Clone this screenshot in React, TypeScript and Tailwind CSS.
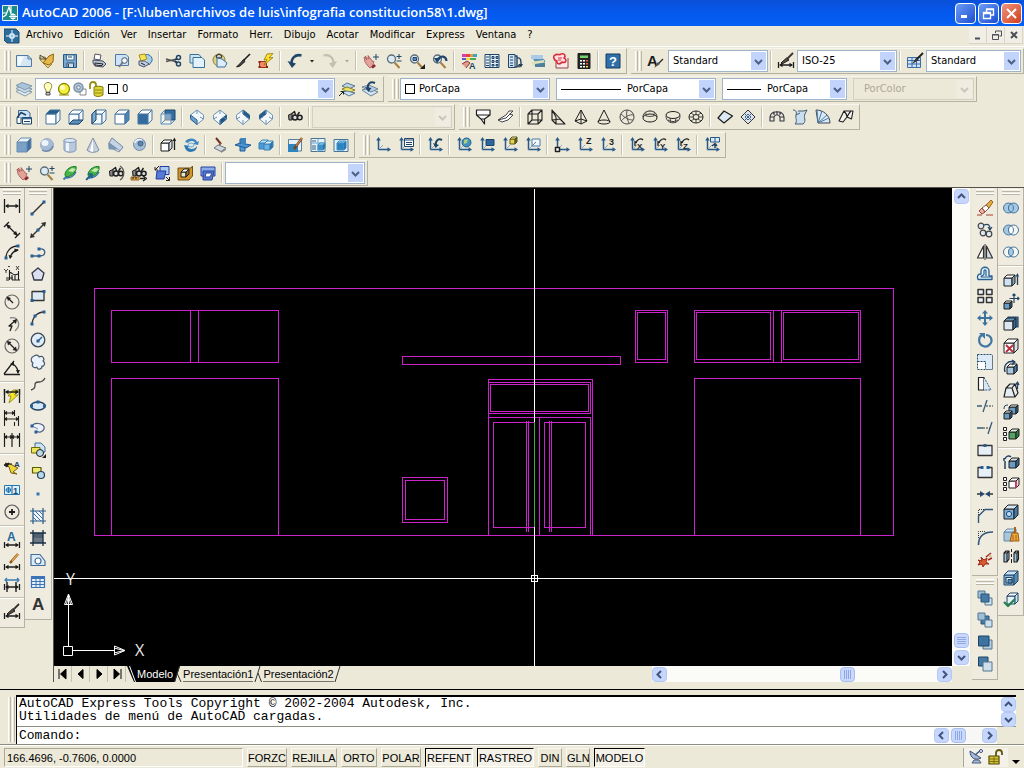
import type { ReactNode } from "react";

const K = "#1e1e1e";
const N = "#1f4468";
const B = "#5a8dbd";
const L = "#cfe3f6";
const W = "#ffffff";

const p = (d: string, stroke = K, fill = "none", w = 1) => (
  <path d={d} stroke={stroke} fill={fill} strokeWidth={w} strokeLinejoin="round" />
);

const c = (x: number, y: number, r: number, stroke = K, fill = "none", w = 1) => (
  <circle cx={x} cy={y} r={r} stroke={stroke} fill={fill} strokeWidth={w} />
);

const e = (x: number, y: number, rx: number, ry: number, stroke = K, fill = "none", w = 1) => (
  <ellipse cx={x} cy={y} rx={rx} ry={ry} stroke={stroke} fill={fill} strokeWidth={w} />
);

const cube = (x: number, y: number, s: number, d: number, front = L, top = W, side = B, line = N) => (
  <>
    {p(`M${x} ${y + d}h${s}v${s}h${-s}z`, line, front)}
    {p(`M${x} ${y + d}l${d} ${-d}h${s}l${-d} ${d}z`, line, top)}
    {p(`M${x + s} ${y + d}l${d} ${-d}v${s}l${-d} ${d}z`, line, side)}
  </>
);

const letter = (x: number, y: number, size: number, ch: string, fill = K) => (
  <text x={x} y={y} fontSize={size} fontWeight="bold" fontFamily="Liberation Sans, sans-serif" fill={fill}>
    {ch}
  </text>
);

const axes = (
  <>
    {p("M3.5 2V12.5H14", "#27598a", "none", 1.5)}
    {p("M3.5 0L1.2 3.5H5.8z", "none", "#27598a")}
    {p("M16 12.5L12.5 10.2V14.8z", "none", "#27598a")}
    {p("M3.5 12.5L8 8", "#8fa9c2")}
  </>
);

const isoView = (shaded: string, fill: string) => (
  <>
    {p("M8 1L14.500 6V10L8 15.500L1.500 10V6z", "#6d93b5", "#f4f8fb")}
    {p(shaded, "#2c5f8e", fill)}
    {p("M8 1V5M1.500 10L5 8M14.500 10L11 8M8 15.500V11", "#6d93b5")}
  </>
);

const hand = (
  <>
    {p("M1 4L4 7L2 3L6 6L5 2.500L8 6L9 8L11 8.500L9.500 13L7 15L4 12L2 9z", "#a5544e", "#e2a39a", 0.8)}
    {p("M8 14L11 11L13 13L10 15.500z", "none", "#8c2b36")}
    {p("M13 1V7M10 4H16", N)}
  </>
);

const lens = (
  <>
    {p("M8.500 9.500L13.500 15", "#a57f3f", "none", 2)}
    {c(5.500, 6, 4, "#5d6d79", "#dceaf3", 1.3)}
  </>
);

const orbit = (
  <>
    {p("M1.500 14.500L5 11", "#3d7fb8", "none", 2)}
    {p("M3 9C4 4 9 1 14 1.500C15 6 11 11 5 12C3.500 11.500 3 10.500 3 9z", "#1a7a25", "#45b545")}
    {p("M6 6L10 3L14 4L11 7z", "none", "#c8ecb0")}
    {p("M4 13C8 13 12 11 14 7", "#2f6ca5", "none", 1.3)}
  </>
);

const camera = (
  <>
    {p("M1.500 6L5 4.500V11H2z", K, "#888")}
    {c(8, 8.500, 2.500, K, "#ddd", 1.5)}
    {c(12.800, 8.500, 2.300, K, "#ddd", 1.5)}
    {p("M5 4.500L7.500 2.500L8.500 6M10.500 6L12.500 3", K, "none", 1.4)}
  </>
);

const dimLine = (y: number, half = 3) => (
  <>
    {p(`M.5 ${y - half}V${y + half}M15.500 ${y - half}V${y + half}M2 ${y}H14`, K, "none", 1.3)}
    {p(`M1 ${y}L4.500 ${y - 2.2}V${y + 2.2}z`, "none", K)}
    {p(`M15 ${y}L11.500 ${y - 2.2}V${y + 2.2}z`, "none", K)}
  </>
);

const brush = (
  <>
    {p("M15 1L8 8", K, "none", 1.6)}
    {p("M8.500 6.500L10 8.500L5 13L1.500 14L5.500 10z", K, "#4a4a4a")}
  </>
);

const bolt = p("M9 2L4 8L7 8L5 15L14 7L10.500 7L14 2z", "#8b7d00", "#f4e52a", 0.8);

const dot = (x: number, y: number) => p(`M${x - 1.5} ${y - 1.5}h3v3h-3z`, "none", "#265f94");

const rings = (a: string, m: string, b: string) => (
  <>
    {c(5.500, 8, 5, "#44739c", a)}
    {c(10.500, 8, 5, "#44739c", b)}
    {p("M8 3.700A5 5 0 0 1 8 12.300A5 5 0 0 1 8 3.700z", "#44739c", m)}
  </>
);

const tree = p("M.5 1.500h3v3h-3zM.5 6.500h3v3h-3zM.5 11.500h3v3h-3z", K, W);

const icons: Record<string, ReactNode> = {
  new: <>{p("M.5 2.500H12L15.500 6V13.500H.5z", "#4e7ba6", "#d5e6f5")}{p("M1.500 3.500H8L4 12.500H1.500z", "none", "#f5faff")}{p("M12 2.500V6H15.500", "#4e7ba6")}</>,
  open: <>{p("M1 4H6L8 6L6 9L13 11L9 15L1 7z", "#a0863f", "#e6cf87")}{p("M4 10L10 3L14.500 1L14 9L10 12z", "#8b6914", "#e8b948")}{p("M1 2L7 6L1 6z", K, "#d3c9a2", 0.7)}</>,
  save: <>{p("M1.500 1.500H14.500V14.500H1.500z", "#285a87", "#78a6ce")}{p("M4.500 2H12V7H4.500z", "#456d91", "#edf5fb")}{p("M5 14V10H11.500V14", "#294e70", "#d0dce6")}{p("M6.500 11V14M6 4H10", "#294e70")}</>,
  print: <>{p("M4 1L10 2L9 7L3 6z", "#556", W)}{p("M2 7L12 8L15 11L12 14L4 13L2 10z", "#445065", "#b5c1d4")}{p("M4 10L12 11L11 12.500L4 12z", K, "#eef")}</>,
  preview: <>{p("M1.500 1.500H12L14.500 4V12.500H1.500z", "#4e7ba6", L)}{p("M9 9L5 14", "#777", "none", 2)}{c(10.500, 7.500, 2.800, "#456", "#f1f8ff")}</>,
  publish: <>{p("M7 2C12 0 16 4 15 8L12 12", "#336da1", "#a8cfea")}{p("M2 2L8 1L10 6L4 8z", "#aa901b", "#f6e253")}{p("M2 8L8 8L12 11L7 14L2 12z", "#46536d", "#c4cede")}{p("M4 10L8 12", K)}</>,
  cut: <>{p("M0 6L11 9M0 8.500L11 6", "#555", "none", 1.3)}{c(12.500, 4.500, 2, N, "none", 1.5)}{c(12.500, 11, 2, N, "none", 1.5)}{p("M9 7L11 5.500M9 8.500L11 10", N, "none", 1.6)}</>,
  copy: <>{p("M1 1.500H10L12 4V10H1z", "#35739b", L)}{p("M4 4.500H13L15.500 7V14.500H4z", "#35739b", "#e2f2fc")}</>,
  paste: <>{c(7, 7, 6, "#8d8135", "#dad184")}{p("M4 3L7 1L10 3L9 5H5z", K, "#ccc")}{p("M5 5L10 6L15 10L13 14H5z", "#3f6f99", "#dcecfa")}</>,
  brush,
  block: <>{p("M1.500 8.500H8.500V14.500H1.500z", "#9d321c", "#ef8a66")}{p("M.5 8h2v2h-2zM.5 13h2v2h-2zM8 13h2v2h-2z", "none", "#8c1f12")}{p("M9 1L6 7L9 6.500L6 12L15 4.500L11 5L15 .5z", "#937500", "#ffe22b", 0.8)}</>,
  undo: <>{p("M14.500 2.500C8 1 4 5 4.500 12", N, "none", 2.600)}{p("M.5 8L9 10.500L5 15z", "none", N)}</>,
  redo: <>{p("M1.500 2.500C8 1 12 5 11.500 12", "#c2bfb1", "none", 2.200)}{p("M15 8L7 10.500L11 15z", "none", "#c2bfb1")}</>,
  drop: p("M6 7H10L8 9.500z", "none", K),
  dropOff: p("M6 7H10L8 9.500z", "none", "#aaa899"),
  hand,
  zoom: <>{lens}{p("M13 1V6M10.500 3.500H15.500M10.500 8H15.500", N)}</>,
  zoomWin: <>{lens}{p("M4 4.500H7.500V7.500H4z", N, B)}{p("M16 11V16H11z", "none", K)}</>,
  zoomPrev: <>{lens}{p("M14.500 8C14 3 9 2 6 6", N, "none", 2.200)}{p("M2 5L9 5L5 10z", "none", N)}</>,
  props: <>{p("M1 1h4v3h-4z", "none", "#db3cb0")}{p("M5 1h4v3h-4z", "none", "#e44343")}{p("M9 1h3v3h-3z", "none", "#ed9736")}{p("M12 1h4v3h-4z", "none", "#37a9c7")}{p("M1 5h4v2h-4z", "none", "#5b5bd1")}{p("M5 5h4v2h-4z", "none", "#efdf3e")}{p("M9 5h6v2h-6z", "none", "#53a84d")}{p("M1 11L6 8L9 10L5 15", "#8f3933", "#dc9b8c")}{letter(8, 16, 9, "A", N)}</>,
  design: <>{p("M1 1.500H15V14.500H1z", N, "#e8f1f9")}{p("M6 2V14", N)}{p("M2 4H5M2 7H5M2 10H5M2 12.500H5", N)}{p("M8 3.500h2v2h-2zM12 3.500h2v2h-2zM8 7.500h2v2h-2zM12 7.500h2v2h-2zM8 11.500h2v1.500h-2zM12 11.500h2v1.500h-2z", N, "#8fb9dd")}</>,
  tools: <>{p("M1.500 1.500H8V14.500H1.500z", N, L)}{p("M3 4H6M3 7H6M3 10H6M3 12.500H6", N)}{p("M8 3H10V14H8M10 5C14 4 14 8 14 11", N, "none", 1.4)}{p("M11.500 11H16L14 14.500z", "none", N)}{c(12, 13, 1, K, W)}</>,
  sheets: <>{p("M1 2H13V6H1z", "none", "#a9cbe8")}{p("M3 6H14L15.500 9H5z", "none", "#5e92b7")}{p("M1 9L14 7V10L3 13z", "none", "#dce2bd")}{p("M5 11L15 9.500V14H5z", "none", "#4e7f9f")}</>,
  markup: <>{p("M3 5V15H15V5", "#934040", "#fce9e9")}{p("M2 2C5 0 6 3 8 1C12 0 13 3 11 5C15 7 12 11 9 9C7 12 3 11 4 8C0 7 0 3 2 2z", "#d72f3c", "#ffdfe1", 1.6)}{p("M5 5H9M5 7H8", "#d72f3c")}</>,
  calc: <>{p("M2 .5H14V15.500H2z", K, "#252525")}{p("M4 2.500H12V5H4z", "none", "#78d26c")}{p("M4 7h2v1.500h-2zM4 10h2v1.500h-2zM4 13h2v1.500h-2zM7 7h2v1.500h-2zM7 10h2v1.500h-2zM7 13h2v1.500h-2z", "none", W)}{p("M10 7h2v1.500h-2zM10 10h2v1.500h-2z", "none", "#f15a3c")}{p("M10 13h2v1.500h-2z", "none", "#ffe34a")}</>,
  help: <>{p("M1 1H15V15H1z", "#193b5d", "#3070a8")}{letter(4, 13, 13, "?", W)}</>,
  textStyle: <>{letter(0, 13, 15, "A")}{p("M16 6L12 10", "#333", "none", 1.5)}{p("M12 9L13 11L7 15L10 10z", "none", "#555")}</>,
  dimStyle: <>{dimLine(12)}{p("M15 0L9 6", "#333", "none", 1.8)}{p("M8.500 5L11 7L4 11L3 10z", K, "#5d4f42")}</>,
  tableStyle: <>{p("M.5 4.500H13.500V14.500H.5z", "#3b6da6", "#cfe2fa")}{p("M.5 7.500H13.500M.5 11H13.500M5 4.500V14.500M9.500 4.500V14.500", "#3b6da6")}{p("M16 0L10 6", K, "none", 1.8)}{p("M9 5L12 7L5 11z", "none", "#333")}</>,
  layers: <>{p("M0 10.500L6 7.500L16 11L9 15z", "#8097a8", "#e5edf3")}{p("M0 7.500L6 4.500L16 8L9 12z", "#8097a8", "#cfdfea")}{p("M0 4.500L6 1.500L16 5L9 9z", "#7c98ae", "#a9c4da")}</>,
  layerCur: <>{p("M3 5L8 2L16 5L10 8z", "#55768f", "#b9d4e6")}{p("M3 8L8 6L16 9L10 12z", "#8a811f", "#ece26b")}{p("M3 11L8 10L16 12L10 15z", "#55768f", L)}{p("M0 15L4 11M1.500 10.500H4.500V13.500", K)}</>,
  layerPrev: <>{p("M0 9L7 7L16 11L9 15z", "#6c8494", L)}{p("M0 6L7 4L16 8L9 11z", "#6c8494", "#b4cde0")}{p("M13 2C8 0 5 3 6 8", N, "none", 2)}{p("M3 6L9.500 7L6.500 11z", "none", N)}</>,
  views: <>{p("M2.500 1.500H11L14 4V9H2.500z", "#376694", L)}{p("M1 9L5 3.500L10 6", N, "none", 1.5)}{p("M6.500 8.500H15.500V15H6.500z", N, W)}{p("M6.500 9.500H15.500", "#376694", "none", 1.6)}{p("M8 12.500H14", N)}{p("M1 9V14.500H5V9", N, W)}</>,
  vTop: cube(1, 1, 10, 4, W, "#285c8b", "#eef4f9", "#45749e"),
  vBottom: <>{cube(1, 1, 10, 4, "#f8fbff", W, "#eef4f9", "#45749e")}{p("M1 15L5 11H15L11 15z", N, "#5d91bd")}</>,
  vLeft: <>{cube(1, 1, 10, 4, "#f3f8fc", W, "#eef4f9", "#45749e")}{p("M1 5L5 1V11L1 15z", N, "#7badd4")}</>,
  vRight: cube(1, 1, 10, 4, W, W, "#4f84b2", "#45749e"),
  vFront: cube(1, 1, 10, 4, "#336c9e", W, "#eef4f9", "#45749e"),
  vBack: <>{p("M5 1H15V11H5z", N, "#336c9e")}{p("M1 5H11V15H1z", B, "#ffffff66")}{p("M1 5L5 1M1 15L5 11M11 15L15 11", B)}</>,
  sw: isoView("M1.500 6L8 11V15.500L1.500 10z", "#69a3cf"),
  se: isoView("M14.500 6L8 11V15.500L14.500 10z", "#1f527f"),
  ne: isoView("M8 1L14.500 6V10L8 5z", "#285c8b"),
  nw: isoView("M8 1L1.500 6V10L8 5z", "#285c8b"),
  camera,
  box: cube(1, 1, 10, 4, "#7ba1c9", "#eaf2f8", "#426f9d", "#688db1"),
  sphere: <>{c(8, 8, 6.500, "#9db1c9", "#a6bad5")}{e(6, 6, 3.500, 3, "none", "#edf4fc")}{p("M3 13C7 16 13 13 14 9", "#7089aa", "none", 1.3)}</>,
  cylinder: <>{p("M2 3V13C4 16 12 16 14 13V3z", "#8298b5", "#b9c8de")}{p("M4 5H7V14H4z", "none", "#edf4fc")}{e(8, 3.500, 6, 2, "#8298b5", "#dce8f5")}</>,
  cone: <>{p("M8 1L14 13C12 16 4 16 2 13z", "#7c8ea8", "#c5cedd")}{p("M8 2L5 14L8 15z", "none", W)}</>,
  wedge: <>{p("M4 1L15 10L11 15L1 10V6z", "#7e93ad", "#eef3f8")}{p("M1 6L4 1L15 10L12 14z", "#7e93ad", "#c4d4e6")}{p("M1 6V12H9z", "#7e93ad", "#7797ba")}</>,
  torus: <>{c(8.500, 7.500, 6, "#7089aa", "#a8bdd8")}{c(9.500, 6.500, 2.500, "#3f6385", "#5e86ab")}{p("M3.500 6C5 3 8 2 11 3", "#edf5ff", "none", 1.6)}</>,
  extrude: <>{cube(1, 3, 8, 3, W, W, L, K)}{p("M14.500 2V13", K, "none", 1.3)}{p("M12.500 4L14.500 .5L16 4z", "none", K)}</>,
  revolve: <>{p("M2 5C5 0 13 1 14 5L16 4L15 8L10 7L12 5.500C9 3 6 4 5 6z", "none", "#3d86c2")}{p("M1 8L7 9L5 10.500C8 13 12 12 14 9C14 16 4 17 2 11z", "none", "#2f78b5")}{e(8, 8, 3, 2, "#73a5cc", "#d6ecfa")}</>,
  slice: <>{p("M4 1L9 7", "#6a3325", "none", 2)}{p("M7 6L10 6L7 10z", "none", "#a4533b")}{p("M2 11L6 8L14 11L9 14.500z", "#6e7584", "#d2d8de")}{p("M9 14.500L14 11V13L9 16z", "none", "#888")}</>,
  section: <>{p("M5 2H10V14H5z", "#1e5d99", "#5599d6")}{p("M0 8L5 6L16 8L11 11z", "#1e5d99", "#4e94d2")}{p("M6 1H11V7H6z", "none", "#4183bd")}</>,
  interfere: <>{cube(1, 3, 6, 3, "#4b9ad2", "#b9e0f5", "#2d74ac", "#3b84bb")}{cube(6, 4, 6, 3, "#6db4e2", "#d9f0fc", "#2d74ac", "#3b84bb")}</>,
  sDraw: <>{p("M1.500 2.500H14.500V14H1.500z", "#577f9f", "#e7f1f7")}{p("M1 7H11V15H1z", "none", "#2f85bd")}{p("M15 1L7 12", "#7c4518", "none", 2.400)}{p("M15 1L9 9", "#d1a268", "none", 1)}</>,
  sView: <>{p("M1 1.500H15V14.500H1z", "#487597", "#e7f1f7")}{p("M8 2V15M1 6H15", "#6ba6ce")}{cube(8, 6, 5, 2, "#3d91cb", "#aadbf2", "#23659d", "#3d8cc1")}{p("M3 8V13M5 8V13M3 3V5M5 3V5", "#34617f")}</>,
  sProf: <>{p("M1 2.500H15V14.500H1z", "#487597", "#e0eff8")}{cube(4, 4, 7, 2, "#2c83c2", "#8dcdf0", "#23659d", "#3d8cc1")}</>,
  ucs: axes,
  ucsDlg: <>{axes}{p("M6.500 1.500H15.500V9.500H6.500z", N, W)}{p("M6.500 3H15.500M8 5.500H14M8 7.500H14", N)}</>,
  ucsPrev: <>{axes}{p("M15 3C11 1 8 4 9 9", N, "none", 2)}{p("M6 6L12 8L8.500 11z", "none", N)}</>,
  ucsWorld: <>{axes}{c(10.500, 5.500, 4.500, "#275f8c", "#4192bf")}{p("M8 3L12 2L11 6L8 7z", "none", "#afcf80")}</>,
  ucsObj: <>{axes}{p("M7 2.500H15V8.500H7z", N, "#2c669a")}</>,
  ucsFace: <>{axes}{cube(8, 0, 5, 2, "#e5d74b", "#f9f19c", "#655d1e", "#5c571f")}</>,
  ucsView: <>{axes}{p("M7 2H15V9H7z", "#4b7fa9", "#f2f6f7")}{p("M7 9L11 5", "#4b7fa9")}</>,
  ucsOrigin: <>{axes}{p("M1.500 10.500H5.500V14.500H1.500z", K, W, 1.5)}</>,
  ucsZ: <>{axes}{letter(9, 7, 9, "Z")}</>,
  ucs3: <>{axes}{letter(9, 8, 9, "3")}</>,
  ucsRx: <>{axes}{letter(8, 12, 8, "X")}{p("M7 6C8 2 12 1 14 3M6 9V4", K, "none", 1.3)}</>,
  ucsRy: <>{axes}{letter(8, 12, 8, "Y")}{p("M7 6C8 2 12 1 14 3M6 9V4", K, "none", 1.3)}</>,
  ucsRz: <>{axes}{letter(8, 12, 8, "Z")}{p("M7 6C8 2 12 1 14 3M6 9V4", K, "none", 1.3)}</>,
  ucsApply: <>{axes}{p("M6.500 .5H15.500V5H6.500zM11 .5V5", "#27598a", "#dceaf6")}{p("M11 11V7M8 9L11 6.500L13 9", N, "none", 1.5)}</>,
  solid2d: p("M1.500 1H15V6L9.500 10V15L6 10L1.500 6zM1.500 6H15M6 10H9.500", K, W, 1.2),
  face3d: p("M0 11L8 9L15 2L11 2L8 6L3 9zM0 11L4 13L10 11L15 6L11 5", "#444", W, 1),
  wBox: <>{p("M1 5H11V15H1zM1 5L5 1H15V11L11 15M11 5L15 1M5 1V11H15M1 15L5 11", K, "none", 1.1)}</>,
  wWedge: p("M2 1V11L6 15H15L2 1L6 8V15M2 11L10 10L15 15", K, "none", 1.1),
  wPyr: p("M8 1L2 12L8 15L14 12zM8 1V15M2 12L8 10L14 12", K, "none", 1),
  wCone: <>{p("M8 1L2 13M8 1L14 13", K)}{e(8, 13, 6, 2, K)}</>,
  wSphere: <>{c(8, 8, 7, "#444")}{p("M2 5C7 10 11 11 14 11M8 1C7 7 8 10 10 14M2 12C6 8 10 5 15 6", "#555")}</>,
  wDome: <>{p("M1 8C1 0 15 0 15 8", K)}{e(8, 9, 7, 4, K)}{p("M4 3.500C3.500 5 4 6 5 7M12 3.500C12.500 5 12 6 11 7M2 6C6 8 10 8 14 6", "#555")}</>,
  wDish: <>{e(8, 6, 7, 3.500, K)}{p("M1 7C1 16 15 16 15 7M5 9L6 14M11 9L10 14M3 11C6 13 10 13 13 11", "#444")}</>,
  wTorus: <>{e(8, 8, 7, 6, K)}{e(8, 8, 3, 2.500, K)}{p("M8 2V5M8 11V14M1 8H5M11 8H15M3 4L6 6M13 4L10 6M3 12L6 10M13 12L10 10", "#444")}</>,
  edge: p("M7 2L15.500 7L7 14L1 9z", K, "#dbe9f4", 1.2),
  mesh3d: <>{p("M8 1L15 8L8 15L1 8z", "#333", "#dce5ef")}{p("M4.500 4.500L11.500 11.500M11.500 4.500L4.500 11.500M8 5L11 8L8 11L5 8z", "#456583")}</>,
  revSurf: <>{p("M1 8C2 1 14 1 15 8M1 8V12H5V8M11 8V12H15V8M5 8C6 5 10 5 11 8M1 8H5M11 8H15M5 2.500V6M11 2.500V6M8 2V6", "#334", "none", 1.1)}</>,
  tabSurf: p("M1 1C4 1 5 3 4 6C3 9 6 12 3 15H11C15 12 11 8 13 5L15 1L12 2H6M4 6L8 4", "#455d70", "#c9dfef", 1),
  ruled: <>{p("M1 1C8 1 15 6 15 14H3z", "#445", "#d6eafa")}{p("M3 14L2 1M3 14L7 2M3 14L12 6M3 14L14 9", "#527a9a")}</>,
  edgeSurf: p("M6 2L15 2L13.500 10L9 8L5 13L1 12zM6 2C8 4 9 6 9 8M13 2C11 4 10 6 9 8", K, "#f2f2ee", 1.1),
  orbit,
  orbit2: <>{orbit}{p("M1 15L6 10M3 9H7V13", "#235d91", "none", 1.5)}</>,
  swivel: <>{camera}{p("M12 1C17 4 17 12 12 15", "#555", "none", 1.3)}</>,
  camDist: <>{camera}{p("M0 12H8V15H0z", "#94632b", "#e0a647")}{p("M2 12V14M5 12V14", K)}{p("M9 13.500H14M12 11L15.500 13.500L12 16", K, "none", 1.3)}</>,
  clip: <>{p("M1 5L5 1M1 2V5H4", K)}{p("M6 1.500H15V9.500H6z", "#263aa6", "#a9c9ed")}{p("M3 6H12L10 14H2z", "#263aa6", "#557bd4")}{p("M12 12L15.500 15.500M12 15.500H15.500V12", K)}</>,
  clipF: <>{p("M1 3H14L15.500 1V11L12 15H1z", "#705019", "#d29627")}{cube(4, 4, 5, 3, "#ebe4cc", W, "#8b7131", K)}</>,
  clipB: <>{p("M1 2H15V11H1z", "#29429a", "#8badea")}{p("M3 6H14L12 15H3z", "#29429a", "#557bd4")}{p("M6 8H12L10 12H5z", "#29429a", W)}</>,
  dLinear: dimLine(6, 7),
  dAligned: <>{p("M3 3L13 13M0 5L5 0M11 16L16 11", K, "none", 1.3)}{p("M2 2L7 4L4 7zM14 14L9 12L12 9z", "none", K)}</>,
  dArc: <>{p("M2 14C2 7 7 2 14 2M6 14C7 10 9 7 14 6", K, "none", 1.3)}{dot(2, 14)}{dot(14, 2)}{p("M6 15L4.500 11L8.500 12zM15 6L10.500 4.500V8.500z", "none", K)}</>,
  dOrd: <>{p("M5.500 4V14M2 14H5M8 9V14M11 9V14M14.500 5V14M5.500 7C8 5 8 11 14 8M2 12H9M8 14H16", K, "none", 1.1)}{p("M0 3L2 5L4 3M2 5V7M12 0L15 4M15 0L12 4M4 .5H6", "#444")}</>,
  dRad: <>{c(8, 8, 7, "#666", "none", 1.2)}{p("M9 9L4 4", K, "none", 1.3)}{p("M2.500 2.500L7 4L4 7z", "none", K)}</>,
  dJog: <>{p("M6 2C14 0 18 9 11 15", "#888", "none", 1.3)}{p("M6 15L8 10L5 10L12 4", K, "none", 1.3)}{p("M13 3L12 8L8.500 4.500z", "none", K)}</>,
  dDia: <>{c(8, 8, 7, "#666", "none", 1.2)}{p("M4 4L12 12", K, "none", 1.3)}{p("M3 3L7.500 4L4 7.500zM13 13L8.500 12L12 8.500z", "none", K)}</>,
  dAng: <>{p("M0 14.500H16M0 14L10 1M9 4C12 6 14 10 14 13", K, "none", 1.3)}{p("M6 4L10 2L10 6zM14 14L12 10H16z", "none", K)}</>,
  dQuick: <>{bolt}{dimLine(4)}{p("M.5 1V15M15.500 1V15", K, "none", 1.3)}</>,
  dBase: p("M.5 0V16M10.500 0V6M14.500 6V16M.5 3H10M.5 9H14M8 1.500L10 3L8 4.500M3 1.500L1 3L3 4.500M12 7.500L14 9L12 10.500M3 7.500L1 9L3 10.500M10.500 12V16", K, "none", 1.1),
  dCont: p("M.5 1V15M8 1V15M15.500 1V15M1 5H15M3 3.500L1 5L3 6.500M6 3.500L8 5L6 6.500M10 3.500L8 5L10 6.500M13 3.500L15 5L13 6.500", K, "none", 1.2),
  leader: <>{p("M1 3L6 4L14 8L9 12L13 14L7 13L5 7z", "#77620a", "#efd53a")}{p("M0 5L5 3L3 7zM1 4H8", K, K)}{letter(10, 7, 8, "A", N)}</>,
  tol: <>{p("M.5 3.500H15.500V12.500H.5z", "#2576af", "#dff1fc")}{p("M8 3.500V12.500M4.500 5V11M1.500 8H7", "#2576af", "none", 1.2)}{c(4.500, 8, 2.200, "#2576af")}{letter(9, 12, 9, "1", "#174a75")}</>,
  center: <>{c(8, 8, 7, "#555", "none", 1.2)}{p("M8 5V11M5 8H11", K, "none", 1.8)}</>,
  dEdit: <>{dimLine(13)}{letter(3, 9, 12, "A", "#23679d")}</>,
  dTedit: <>{dimLine(13)}{p("M14 0L6 9", "#8c5417", "none", 2.600)}{p("M14 0L8 7", "#eca94d", "none", 1.2)}</>,
  dUpd: <>{dimLine(11)}{p("M3 6V16M12 6V16", K, "none", 1.4)}{p("M1 4H15M3 2L1 4L3 6M13 2L15 4L13 6", "#3b7faf", "none", 1.3)}</>,
  line: <>{p("M2 14L14 2", "#333", "none", 1.4)}{dot(2, 14)}{dot(14, 2)}</>,
  xline: <>{p("M1 15L15 1", "#333", "none", 1.4)}{dot(8, 8)}{p("M0 16L1 11L5 15zM16 0L15 5L11 1z", "none", "#333")}</>,
  pline: <>{p("M2 12H9C17 12 16 4 10 5", "#3e6384", "none", 1.4)}{dot(2, 12)}{dot(9, 12)}{dot(9, 5)}</>,
  polygon: p("M8 2L14 7L12 14H4L2 7z", "#303845", "#dddff1", 1.3),
  rect: <>{p("M2 3.500H14V12.500H2z", "#333", "#dbeaf4", 1.3)}{dot(2, 12.500)}{dot(14, 3.500)}</>,
  arc: <>{p("M2 15C2 8 7 2 14 2", "#333", "none", 1.3)}{dot(2, 14)}{dot(5, 6)}{dot(14, 2)}</>,
  circle: <>{c(8, 8, 6.800, "#38475a", "#e2ecf7", 1.3)}{p("M8 9L12 5", "#27598a", "none", 1.3)}{dot(8, 9)}</>,
  cloud: p("M4 2C7 0 9 2 9 3C13 1 15 5 13 7C16 9 14 13 12 12C12 16 7 16 7 13C4 15 1 12 3 9C0 7 1 3 4 2z", "#4a5a69", "#e9f3fd", 1.2),
  spline: p("M1 14C9 12 1 6 9 6C13 6 14 4 15 2", "#444", "none", 1.3),
  ellipse: <>{e(8, 8, 7, 4, "#24435f", "#d6e8f8", 1.4)}{dot(1.500, 8)}{dot(8, 4)}{dot(14.500, 8)}</>,
  earc: <>{p("M2 6C5 1 16 4 14 9C13 12 9 13 6 11", "#4c5f82", "#edf2f8", 1.2)}{p("M2 6L8 9", "#6d7fc0")}{dot(2, 6)}{dot(6, 12)}</>,
  insert: <>{p("M5 1H11L15 5V10H5z", "#3c6f97", L)}{p("M1.500 5.500H10V11H1.500z", "#706c00", "#ebe65a")}{c(10, 11, 3.500, K, "#b9d9ed")}{p("M16 12V16H12z", "none", K)}</>,
  mkblock: <>{p("M2.500 3.500H11V9H2.500z", "#5c5c00", "#efea75", 1.2)}{c(11, 11, 3.500, "#23425d", "#b9d9ed", 1.2)}</>,
  point: p("M6.500 6.500H9.500V9.500H6.500z", "none", "#2f79b0"),
  hatch: <>{p("M3 3H13V13H3z", "none", "#f2f8ff")}{p("M3 0V16M13 0V16M0 3H16M0 13H16", "#27598a", "none", 1.2)}{p("M3 9L7 13M3 5L11 13M5 3L13 11M9 3L13 7", "#3c6c9c")}</>,
  gradient: <>{p("M3 3H13V13H3z", "none", "#51616f")}{p("M3 8H13V13H3z", "none", "#6c7a86")}{p("M3 0V16M13 0V16M0 3H16M0 13H16", "#1a2f45", "none", 1.3)}</>,
  region: <>{p("M1 2.500H10L15 9V13.500H1z", "#456e98", "#dcebf9", 1.2)}{c(8, 9, 3, "#456e98", W, 1.2)}</>,
  table: <>{p("M1.500 2.500H14.500V13.500H1.500z", "#3a74b6", "#e6f1fc", 1.2)}{p("M1.500 4H14.500", "#3a74b6", "none", 2)}{p("M1.500 7.500H14.500M1.500 10.500H14.500M6 3V13.500M10 3V13.500", "#3a74b6")}</>,
  mtext: letter(2, 14, 17, "A", "#333"),
  erase: <>{p("M0 15H5M9 15H16", "#a03c2c", "none", 1.1)}{p("M9 5L14 0L16 2L12 8z", "#9b6823", "#e5a940")}{p("M5 8L9 5L12 8L8 12z", "#825c43", W)}{p("M5 8L8 12L5 14L2 11z", "#a04030", "#e2b5a6")}</>,
  copyObj: <>{c(4, 4, 2.800, "#444", "#dce7ef", 1.2)}{c(6, 11, 2.800, "#444", "#dce7ef", 1.2)}{c(12, 12, 2.800, "#444", "#dce7ef", 1.2)}{p("M7 3C12 1 13 4 13 7M11 5L13 8L15 5", N, "none", 1.2)}</>,
  mirror: <>{p("M6.500 2V14H.5z", "#333", W, 1.2)}{p("M9.500 2V14H15.500z", "#333", "#d5dfe6", 1.2)}{p("M8 0V16", "#333")}</>,
  offset: <>{p("M1 13.500H15V10H12V5C12 0 4 0 4 5V8C0 8 0 11 1 13.500z", "#285f90", "#dfeffa", 1.3)}{p("M4 11H15M4 11C4 9 7 10 7 8V5C7 3.500 9 3.500 9 5V10", "#285f90", "none", 1.2)}</>,
  array: p("M1 1.500H6.500V6.500H1zM9.500 1.500H15V6.500H9.500zM1 9.500H6.500V14.500H1zM9.500 9.500H15V14.500H9.500z", "#333", "#eef5fb", 1.5),
  move: <>{p("M8 2V14M2 8H14", "#3d739f", "none", 2)}{p("M8 0L5 3.500H11zM8 16L5 12.500H11zM0 8L3.500 5V11zM16 8L12.500 5V11z", "none", "#3d739f")}</>,
  rotate: <>{p("M5 3C1 5 1 12 6 14C11 16 16 11 14 6C13 4 11 3 9 3", "#4277a4", "none", 2.200)}{p("M2 1H8V7z", "none", "#4277a4")}</>,
  scale: <>{p("M.5 .5H15.500V15.500H.5z", "none", "#dcebf7")}{p("M15.500 1V15.500H9", "#687c8c")}{p("M.5 7.500H8.500V15.500H.5z", "none", W)}<path d="M.5 .5H15.500M.5 .5V15.500H9M.5 7.500H8.500V15" stroke="#274a6a" strokeDasharray="2 1" fill="none" /></>,
  stretch: <>{p("M1.500 1.500H7V14H1.500z", K, W, 1.2)}<path d="M7 1.500L14 14H7" stroke="#315e8a" strokeDasharray="2 1" fill="#d7e7f3" /></>,
  trim: <>{p("M0 8H5M6 14L10 2", "#385d7b", "none", 1.3)}<path d="M9 8H16" stroke="#333" strokeDasharray="2 1" /></>,
  extend: <>{p("M0 8H6M11 14L15 2", "#385d7b", "none", 1.3)}<path d="M6 8H13" stroke="#333" strokeDasharray="2 1" /></>,
  breakPt: <>{p("M1 3.500H15V13.500H1z", "#333", "#e7f0f7", 1.3)}{dot(8, 3.500)}</>,
  breakOb: <>{p("M5 3.500H1V13.500H15V3.500H11", "#333", "#e7f0f7", 1.3)}{dot(5, 3.500)}{dot(11, 3.500)}</>,
  join: <>{p("M0 8H6M10 8H16", "#333", "none", 1.5)}{p("M3 5L8 8L3 11zM13 5L8 8L13 11z", "none", "#27496a")}</>,
  chamfer: <>{p("M1.500 15V8L8 1.500H16", "#31577b", "none", 1.4)}<path d="M1.500 7V1.500H8" stroke="#333" strokeDasharray="1 1" fill="none" /></>,
  fillet: <>{p("M1.500 15C1.500 6 6 2 16 2", "#31577b", "none", 1.6)}<path d="M1.500 8V1.500H8" stroke="#333" strokeDasharray="1 1" fill="none" /></>,
  explode: <>{p("M1 8L5 9L4 5L7 8L10 6L9 10L12 12L8 12L6 15L5 12L1 13L3 10z", "#9c281a", "#db5d31")}{p("M9 5L14 1M11 8L15 6", "#9c281a", "none", 1.5)}{c(13, 4, 1.500, "none", "#d9c089")}</>,
  union: rings("#a6c9e3", "#a6c9e3", "#a6c9e3"),
  subtract: rings("#a6c9e3", W, "#f6f6f0"),
  intersect: rings("#f6f6f0", "#a6c9e3", "#f6f6f0"),
  fExtrude: <>{cube(1, 3, 8, 3, L, W, "#8ba1b3", K)}{p("M14.500 4V13", N, "none", 1.4)}{p("M12.500 4.500L14.500 1L16 4.500z", "none", N)}</>,
  fMove: <>{cube(1, 7, 6, 2, "#699ec7", W, "#36698f", K)}{p("M11 0V9M6.500 4.500H16M9.500 1.500L11 0L12.500 1.500M14.500 3L16 4.500L14.500 6", N, "none", 1.2)}</>,
  fOffset: <>{p("M5 1H15V11H5z", N, "#4f86b5", 1.2)}{cube(1, 2, 9, 3, "#dbe7f1", "#6899c2", "#36698f", K)}</>,
  fDelete: <>{cube(1, 1, 10, 4, W, W, "#d9e0e6", K)}{p("M3 7L10 14M10 7L3 14", "#bd2b3a", "none", 1.8)}</>,
  fRotate: <>{cube(4, 4, 7, 3, "#a9c8df", W, "#527c9f", K)}{p("M2 12C0 5 5 0 11 2M9 0L12 2L9 5M14 5V11", N, "none", 1.4)}</>,
  fTaper: <>{p("M1 15L3 6H9L12 15zM3 6L7 2H12L9 6M12 2L15 11L12 15", K, "#e5edf3", 1.2)}{p("M14.500 7V1M12.500 3L14.500 0L16 3", N, "none", 1.3)}</>,
  fCopy: <>{cube(6, 1, 7, 2, "#6a9bc2", W, "#36698f", K)}{cube(1, 7, 6, 2, "#6a9bc2", W, "#36698f", K)}{p("M1 5C1 2 2 1 5 1", N)}</>,
  fColor: <>{tree}{cube(6, 3, 7, 3, "#53a365", "#dfeee2", "#2e7d43", K)}</>,
  eCopy: <>{cube(6, 4, 7, 3, "#6a9bc2", "#cfe1ef", "#36698f", K)}{p("M2 15V7M2 5C3 2 6 1 8 3M1 7V4", N, "none", 1.5)}</>,
  eColor: <>{tree}{cube(6, 2, 7, 3, W, W, "#f5d8df", K)}{p("M13 5V12", "#d83a63", "none", 1.5)}</>,
  imprint: <>{cube(1, 1, 10, 4, "#7fb0da", "#d6e7f4", "#447aa5", K)}{c(6, 10, 2.600, "#174d80", "#bddaf0")}</>,
  clean: <>{cube(1, 3, 9, 3, "#a9c6dc", L, "#79a2c0", "#6289a6")}{p("M12 1V7", "#a8641b", "none", 2)}{p("M9 7H15L16 15H7z", "#9d5b12", "#eda93c")}{p("M10 9V14M13 9V14", "#a8641b")}</>,
  separate: <>{p("M1 5L3 3H6V11L4 14H1zM1 5H4L6 3M4 5V14", K, "#9fc3de", 1.1)}{p("M11 5L13 3H15.500V11L14 14H11zM11 5H14L15.500 3M14 5V14", K, "#9fc3de", 1.1)}{p("M8.500 1V4M8.500 6V9M8.500 11V15", K)}</>,
  shell: <>{cube(1, 1, 10, 4, "#93bad8", L, "#5b8db4", N)}{p("M3 7.500H9V13H3z", N, "#eaf3fa", 1.2)}{p("M5 9.500H9V13H5z", N, "#5b8db4")}</>,
  check: <>{cube(4, 1, 8, 3, "#e7f1f8", W, L, N)}{p("M1 10L5 14L12 7", "#21834c", "none", 2.200)}</>,
  front: <>{p("M1 1H8V8H1z", "#54758f", "#9fbfd8")}{p("M8 8H15V15H8z", "#54758f", "#cde0ee")}{p("M4 4H12V12H4z", "#2a5578", "#477ba6")}</>,
  backI: <>{p("M4 4H12V12H4z", "#2a5578", "#477ba6")}{p("M1 1H8V8H1z", "#54758f", "#9fbfd8")}{p("M8 8H15V15H8z", "#54758f", "#cde0ee")}</>,
  above: <>{p("M6 6H15V15H6z", "#54758f", "#b5cde0")}{p("M1.500 2H12V12H1.500z", "#1d4565", "#3e73a0")}</>,
  under: <>{p("M1.500 1H11V10H1.500z", "#1d4565", "#477ba6")}{p("M6 6H15V15H6z", "#54758f", "#cfe0ec")}</>,
  bulb: <>{p("M6 9C3 6 4 1.500 8 1.500C12 1.500 13 6 10 9V11H6z", "#85854a", "#ffffb8")}{p("M6 11.500H10V14H6z", "#555", "#bbb")}</>,
  sun: <>{c(8, 8, 5.500, "#8b8b00", "#f3ef3f", 1.3)}{c(6.500, 6.500, 2.500, "none", "#fffdbb")}{p("M3 14H13", "#8b8b00")}</>,
  gear: <>{p("M8 8H14V14H8z", "#888", W)}{c(6.500, 6.500, 4.500, "#7d95aa", "#b4c4d3", 1.5)}{c(6.500, 6.500, 1.800, "#6d869c", "#dfe7ed")}</>,
  lock: <>{p("M2 8V4C2 0 8 0 8 4V6", "#948d17", "none", 1.8)}{p("M6 6C8 5 13 5 15 6V14C12 16 8 16 6 14z", "#817b0f", "#dcd532")}{p("M7 9H14M7 12H14", "#918b18")}</>,
  padlock: <>{p("M8 8V4C8 0 14 0 14 4V6", "#5f5510", "none", 1.8)}{p("M1 7H11V15H1z", "#4f470a", "#d9c52c", 1.2)}{p("M2 10H10M2 12.500H10M6 8V15", "#7a6f14")}</>,
  dish: <>{p("M4 14H13L11 11H6z", "#4a5c84", "#aab8d2")}{p("M2 2C2 9 7 12 13 9z", "#3b4d77", "#a6b8da")}{p("M7 6L13 1", "#3b4d77", "none", 1.4)}{c(13, 2, 1.500, "#3b4d77", W)}</>,
};

function Icon({ name }: { name: string }) {
  return (
    <svg viewBox="0 0 16 16" className="h-4 w-4 shrink-0 overflow-visible" aria-hidden="true">
      {icons[name]}
    </svg>
  );
}

function Tools({ names, vertical = false }: { names: string; vertical?: boolean }) {
  return names.split(" ").map((name, i) => {
    if (name === "|") {
      return vertical ? (
        <span key={i} className="my-0.5 h-0.5 w-full shrink-0 border-t border-[#c5c2b2] bg-white" />
      ) : (
        <span key={i} className="mx-0.5 h-5 w-0.5 shrink-0 border-l border-[#c5c2b2] bg-white" />
      );
    }
    const narrow = name.startsWith("drop");
    return (
      <button
        key={i}
        type="button"
        aria-label={name}
        className={`flex h-[22px] shrink-0 items-center justify-center ${narrow ? "w-3" : vertical ? "w-full" : "w-[23px]"}`}
      >
        <Icon name={name} />
      </button>
    );
  });
}

function Grip() {
  return (
    <span className="flex h-full w-3 shrink-0 gap-px py-0.5 pl-1">
      <span className="w-[3px] border-l border-r border-l-white border-r-[#bab7a8]" />
      <span className="w-[3px] border-l border-r border-l-white border-r-[#bab7a8]" />
    </span>
  );
}

function Bar({ label, children, grow = false }: { label: string; children: ReactNode; grow?: boolean }) {
  return (
    <div
      role="toolbar"
      aria-label={label}
      className={`flex h-[26px] items-center border-t border-r border-b border-t-[#f7f5ec] border-r-[#b5b2a3] border-b-[#b5b2a3] pr-0.5 ${grow ? "min-w-0 flex-1" : "shrink-0"}`}
    >
      <Grip />
      {children}
    </div>
  );
}

function ColumnBar({ label, names }: { label: string; names: string }) {
  return (
    <div
      role="toolbar"
      aria-label={label}
      aria-orientation="vertical"
      className="flex w-full flex-col items-center border-r border-b border-[#b5b2a3] bg-[#efecdf] pb-1"
    >
      <span className="mx-1 mt-px mb-0.5 flex h-[6px] w-[18px] flex-col gap-px">
        <span className="h-[3px] border-t border-b border-t-white border-b-[#bab7a8]" />
        <span className="h-[3px] border-t border-b border-t-white border-b-[#bab7a8]" />
      </span>
      <Tools names={names} vertical />
    </div>
  );
}

function Combo({
  label,
  value,
  className,
  lead,
  disabled = false,
}: {
  label: string;
  value: string;
  className: string;
  lead?: ReactNode;
  disabled?: boolean;
}) {
  return (
    <label
      className={`relative flex h-[22px] min-w-0 items-center gap-1 border pl-1 ${disabled ? "border-[#d3d0c2] bg-[#ece9d8]" : "border-[#9db4cb] bg-white"} ${className}`}
    >
      {lead}
      <select
        aria-label={label}
        disabled={disabled}
        className={`h-full min-w-0 flex-1 appearance-none bg-transparent pr-4 outline-none ${disabled ? "text-[#aca899]" : "text-black"}`}
      >
        <option>{value}</option>
      </select>
      <span
        className={`pointer-events-none absolute top-px right-px bottom-px flex w-[15px] items-center justify-center ${disabled ? "bg-[#efede2]" : "bg-[#c2d3fc]"}`}
      >
        <svg viewBox="0 0 9 9" className="h-[9px] w-[9px]" aria-hidden="true">
          <path d="M1 3L4.500 6.500L8 3" fill="none" stroke={disabled ? "#c9c7ba" : "#4d6185"} strokeWidth="2" />
        </svg>
      </span>
    </label>
  );
}

const chevrons = {
  up: "M1 6L4.500 2.500L8 6",
  down: "M1 3L4.500 6.500L8 3",
  left: "M6 1L2.500 4.500L6 8",
  right: "M3 1L6.500 4.500L3 8",
};

function ScrollButton({ dir }: { dir: keyof typeof chevrons }) {
  return (
    <button
      type="button"
      aria-label={`Scroll ${dir}`}
      className="flex h-[15px] w-[15px] shrink-0 items-center justify-center rounded-sm border border-[#b4c8f6] bg-[#c6d6fc]"
    >
      <svg viewBox="0 0 9 9" className="h-[9px] w-[9px]" aria-hidden="true">
        <path d={chevrons[dir]} fill="none" stroke="#40557e" strokeWidth="2" />
      </svg>
    </button>
  );
}

function Thumb({ vertical = false }: { vertical?: boolean }) {
  return (
    <span className="flex h-[15px] w-[15px] shrink-0 items-center justify-center rounded-sm border border-[#a8bef0] bg-[#c9d8fc]">
      <svg viewBox="0 0 9 9" className="h-[9px] w-[9px]" aria-hidden="true">
        <path d={vertical ? "M0 1.500H9M0 3.500H9M0 5.500H9M0 7.500H9" : "M1.500 0V9M3.500 0V9M5.500 0V9M7.500 0V9"} stroke="#8ea8e4" />
      </svg>
    </span>
  );
}

const menus = ["Archivo", "Edición", "Ver", "Insertar", "Formato", "Herr.", "Dibujo", "Acotar", "Modificar", "Express", "Ventana", "?"];

const rects = [
  [40, 100, 799, 247],
  [57, 122, 167, 52],
  [57, 190, 167, 157],
  [348, 168, 218, 8],
  [581, 122, 32, 52],
  [583, 124, 28, 47],
  [640, 122, 166, 52],
  [642, 124, 74, 47],
  [729, 124, 75, 47],
  [640, 190, 166, 157],
  [348, 289, 45, 45],
  [351, 292, 39, 39],
  [434, 191, 104, 156],
  [434, 194, 102, 31],
  [436, 196, 98, 27],
  [434, 229, 102, 118],
  [439, 234, 41, 105],
  [490, 234, 41, 105],
];

const verticals = [
  [136, 122, 174],
  [144, 122, 174],
  [719, 122, 174],
  [727, 122, 174],
  [472, 232, 343],
  [474, 232, 343],
  [485, 229, 347],
  [495, 232, 343],
  [497, 232, 343],
];

function Drawing() {
  return (
    <svg className="h-full w-full bg-black" role="img" aria-label="Alzado de la fachada" shapeRendering="crispEdges" fill="none">
      <g transform="translate(.5 .5)" stroke="#cb22cb">
        {rects.map(([x, y, w, h], i) => (
          <rect key={i} x={x} y={y} width={w} height={h} />
        ))}
        {verticals.map(([x, a, b], i) => (
          <line key={i} x1={x} x2={x} y1={a} y2={b} />
        ))}
      </g>
      <g stroke="#ffffff">
        <line x1="480.500" x2="480.500" y1="1" y2="100%" />
        <line x1="0" x2="100%" y1="390.500" y2="390.500" />
        <line x1="480.500" x2="480.500" y1="234" y2="339" stroke="#35b535" />
        <rect x="477.500" y="387.500" width="6" height="6" />
        <g shapeRendering="auto">
          <path d="M9.500 458.500H18.500V467.500H9.500zM14.500 458V407M10.500 416.500L14.500 406L18.500 416.500zM12.500 416L14.500 408L16.500 416M19 462.500H60M60.500 458L71 462.500L60.500 467zM60 460L70 462.500L60 465" />
        </g>
      </g>
      <g fill="#e8e8e8" fontFamily="Open Sans, Noto Sans, sans-serif" fontSize="16" textAnchor="middle">
        <text x="85.500" y="468">X</text>
        <text x="16.500" y="397">Y</text>
      </g>
    </svg>
  );
}

const navArrows = ["M3 3V13M4.500 8L10 3V13z", "M4 8L9 3.500V12.500z", "M10 8L5 3.500V12.500z", "M11 3V13M9.500 8L4 3V13z"];

function LayoutTabs() {
  return (
    <div className="flex h-4 shrink-0 items-stretch font-['Liberation_Sans',sans-serif]">
      {navArrows.map((d, i) => (
        <button key={i} type="button" aria-label={`Nav ${i + 1}`} className="flex w-[18px] items-center justify-center border-r border-[#c5c2b2]">
          <svg viewBox="0 0 14 16" className="h-4 w-3.5" aria-hidden="true">
            <path d={d} fill="#000" stroke="#000" />
          </svg>
        </button>
      ))}
      <svg viewBox="0 0 10 16" className="ml-px h-4 w-2.5" aria-hidden="true">
        <path d="M0 0H10V16H7z" fill="#000" />
        <path d="M2.500 0L8.500 16" stroke="#fff" />
      </svg>
      <button type="button" className="bg-black leading-4 text-white">Modelo</button>
      <svg viewBox="0 0 10 16" className="h-4 w-2.5" aria-hidden="true">
        <path d="M0 0H7L2 16H0z" fill="#000" />
        <path d="M6.500 0L1.500 16M4 7L8 16" stroke="#333" />
      </svg>
      <button type="button" className="border-b border-[#77756a] leading-4">Presentación1</button>
      <svg viewBox="0 0 10 16" className="h-4 w-2.5" aria-hidden="true">
        <path d="M7 0L2 16M5 7L8.500 16" stroke="#333" />
      </svg>
      <button type="button" className="border-b border-[#77756a] leading-4">Presentación2</button>
      <svg viewBox="0 0 10 16" className="h-4 w-2.5" aria-hidden="true">
        <path d="M6 0L1 16" stroke="#333" />
      </svg>
    </div>
  );
}

const modes: [string, boolean, string][] = [
  ["FORZC", false, "w-10"],
  ["REJILLA", false, "w-[46px]"],
  ["ORTO", false, "w-9"],
  ["POLAR", false, "w-10"],
  ["REFENT", true, "w-12"],
  ["RASTREO", true, "w-[57px]"],
  ["DIN", false, "w-6"],
  ["GLN", false, "w-6"],
  ["MODELO", true, "w-[51px]"],
];

const swatch = <span className="h-[10px] w-[10px] shrink-0 border border-black bg-white" />;

export default function App() {
  return (
    <div className="flex h-screen flex-col overflow-hidden bg-[#ece9d8] font-['DejaVu_Sans_Condensed','DejaVu_Sans',sans-serif] text-[11px] text-black select-none">
      <header className="flex h-[26px] shrink-0 items-center gap-1 bg-linear-to-b from-[#0a50d8] via-[#0458ee] to-[#0560f5] pr-0.5 pl-0.5">
        <svg viewBox="0 0 16 16" className="h-4 w-4" aria-hidden="true">
          <path d="M.5 .5H15.500V15.500H.5z" fill="#1a8c8c" stroke="#eee" />
          <path d="M1 12L4 10L7 2L9 9M9 1V9M1 8H5" stroke="#fff" fill="none" strokeWidth="1.2" />
          <path d="M9 9.500H13V13.500H9zM11 8V15M7 11.500H15" stroke="#fff" fill="none" />
        </svg>
        <h1 className="min-w-0 flex-1 truncate font-['Open_Sans',sans-serif] text-[13px] font-semibold text-white">
          AutoCAD 2006 - [F:\luben\archivos de luis\infografia constitucion58\1.dwg]
        </h1>
        <div className="flex gap-0.5">
          <button type="button" aria-label="Minimizar" className="flex h-[21px] w-[21px] items-center justify-center rounded border border-white bg-linear-to-br from-[#6d9cf5] to-[#1c4bd0]">
            <svg viewBox="0 0 13 13" className="h-[13px] w-[13px]"><path d="M2 9.500H8" stroke="#fff" strokeWidth="3" /></svg>
          </button>
          <button type="button" aria-label="Restaurar" className="flex h-[21px] w-[21px] items-center justify-center rounded border border-white bg-linear-to-br from-[#6d9cf5] to-[#1c4bd0]">
            <svg viewBox="0 0 13 13" className="h-[13px] w-[13px]"><path d="M4.500 5V2H11.500V8H9M4.500 2.500H11.500M1.500 5.500H8.500V11.500H1.500zM1.500 6.500H8.500" stroke="#fff" fill="none" strokeWidth="1.300" /></svg>
          </button>
          <button type="button" aria-label="Cerrar" className="flex h-[21px] w-[21px] items-center justify-center rounded border border-white bg-linear-to-br from-[#f0937c] to-[#cf3a14]">
            <svg viewBox="0 0 13 13" className="h-[13px] w-[13px]"><path d="M2 2L11 11M11 2L2 11" stroke="#fff" strokeWidth="2" /></svg>
          </button>
        </div>
      </header>

      <nav className="flex h-[21px] shrink-0 items-center border-b border-white pb-px pl-1">
        <svg viewBox="0 0 16 16" className="mr-1.5 h-4 w-4" aria-hidden="true">
          <path d="M0 1H12L15 4V15H3L0 12z" fill="#2a6d9c" stroke="#1e4d70" />
          <path d="M8 2V14M2 8H14" stroke="#fff" />
          <path d="M6 6H10V10H6z" fill="#8cc3e6" stroke="#fff" />
        </svg>
        <ul className="flex flex-1 gap-[11px]">
          {menus.map((m) => (
            <li key={m}>
              <button type="button">{m}</button>
            </li>
          ))}
        </ul>
        <div className="flex pr-px">
          {["M3 9.500H8", "M5.500 4V2H11.500V7H9.500M2.500 5.500H8.500V10.500H2.500zM2 6H9", "M3 3L9 9M9 3L3 9"].map((d, i) => (
            <button key={d} type="button" aria-label={["Minimizar dibujo", "Restaurar dibujo", "Cerrar dibujo"][i]} className="flex h-[17px] w-[18px] items-center justify-center border-r border-b border-[#d8d5c7] bg-[#f1efe5]">
              <svg viewBox="0 0 12 12" className="h-3 w-3"><path d={d} fill="none" stroke="#4b4f58" strokeWidth={i === 1 ? 1 : 2} /></svg>
            </button>
          ))}
        </div>
      </nav>

      <div className="flex h-7 shrink-0 items-center gap-1">
        <Bar label="Estándar">
          <Tools names="new open save | print preview publish | cut copy paste brush block | undo drop redo dropOff | hand zoom zoomWin zoomPrev | props design tools sheets markup calc | help" />
        </Bar>
        <Bar label="Estilos" grow>
          <Tools names="textStyle" />
          <Combo label="Estilo de texto" value="Standard" className="ml-0.5 w-[100px] shrink-0" />
          <Tools names="| dimStyle" />
          <Combo label="Estilo de cota" value="ISO-25" className="w-[100px] shrink-0" />
          <Tools names="| tableStyle" />
          <Combo label="Estilo de tabla" value="Standard" className="flex-1" />
        </Bar>
      </div>

      <div className="flex h-7 shrink-0 items-center gap-1">
        <Bar label="Capas">
          <Tools names="layers" />
          <Combo
            label="Capa"
            value="0"
            className="w-[300px]"
            lead={
              <>
                <span className="flex"><Icon name="bulb" /><Icon name="sun" /><Icon name="gear" /><Icon name="lock" /></span>
                {swatch}
              </>
            }
          />
          <Tools names="layerCur layerPrev" />
        </Bar>
        <Bar label="Propiedades">
          <div className="flex gap-1.5">
            <Combo label="Color" value="PorCapa" className="w-[150px]" lead={swatch} />
            <Combo label="Tipo de línea" value="PorCapa" className="w-40" lead={<span className="mr-0.5 h-px w-[60px] shrink-0 bg-black" />} />
            <Combo label="Grosor de línea" value="PorCapa" className="w-[125px]" lead={<span className="mr-0.5 h-px w-[34px] shrink-0 bg-black" />} />
            <Combo label="Estilo de trazado" value="PorColor" className="w-[121px]" lead={<span className="w-0.5" />} disabled />
          </div>
        </Bar>
      </div>

      <div className="flex h-7 shrink-0 items-center gap-1">
        <Bar label="Vista">
          <Tools names="views | vTop vBottom vLeft vRight vFront vBack | sw se ne nw | camera |" />
          <Combo label="Vista guardada" value="" className="w-[140px]" disabled />
        </Bar>
        <Bar label="Superficies">
          <Tools names="solid2d face3d | wBox wWedge wPyr wCone wSphere wDome wDish wTorus | edge mesh3d | revSurf tabSurf ruled edgeSurf" />
        </Bar>
      </div>

      <div className="flex h-7 shrink-0 items-center gap-1">
        <Bar label="Sólidos">
          <Tools names="box sphere cylinder cone wedge torus | extrude revolve | slice section interfere | sDraw sView sProf" />
        </Bar>
        <Bar label="SCP">
          <Tools names="ucs ucsDlg | ucsPrev | ucsWorld ucsObj ucsFace ucsView | ucsOrigin ucsZ ucs3 | ucsRx ucsRy ucsRz | ucsApply" />
        </Bar>
      </div>

      <div className="flex h-7 shrink-0 items-center">
        <Bar label="Órbita 3D">
          <Tools names="hand zoom orbit orbit2 swivel camDist clip clipF clipB |" />
          <Combo label="Modo de visualización" value="" className="w-[140px]" />
        </Bar>
      </div>

      <main className="flex min-h-0 flex-1 border-t border-[#55534a]">
        <aside className="w-[25px] shrink-0">
          <ColumnBar label="Acotar" names="dLinear dAligned dArc dOrd | dRad dJog dDia dAng | dQuick dBase dCont | leader tol center | dEdit dTedit dUpd | dimStyle" />
        </aside>
        <aside className="mr-px w-[27px] shrink-0">
          <ColumnBar label="Dibujo" names="line xline pline polygon rect arc circle cloud spline ellipse earc insert mkblock point hatch gradient region table mtext" />
        </aside>
        <section className="flex min-w-0 flex-1 flex-col border-l border-[#55534a]">
          <div className="flex min-h-0 flex-1">
            <div className="min-w-0 flex-1 overflow-hidden"><Drawing /></div>
            <div className="flex w-[18px] shrink-0 flex-col items-center gap-0.5 bg-[#fbfbf8] py-px">
              <ScrollButton dir="up" />
              <span className="flex-1" />
              <Thumb vertical />
              <ScrollButton dir="down" />
            </div>
          </div>
          <div className="flex shrink-0">
            <LayoutTabs />
            <span className="flex-1" />
            <div className="mr-[18px] flex h-4 w-[300px] items-center bg-[#fbfbf8]">
              <ScrollButton dir="left" />
              <span className="flex-[172]" />
              <Thumb />
              <span className="flex-[81]" />
              <ScrollButton dir="right" />
            </div>
          </div>
        </section>
        <aside className="ml-0.5 flex w-[26px] shrink-0 flex-col gap-0.5">
          <ColumnBar label="Modificar" names="erase copyObj mirror offset array move rotate scale stretch trim extend breakPt breakOb join chamfer fillet explode" />
          <ColumnBar label="Orden de objetos" names="front backI above under" />
        </aside>
        <aside className="w-[26px] shrink-0">
          <ColumnBar label="Editar sólidos" names="union subtract intersect | fExtrude fMove fOffset fDelete fRotate fTaper fCopy fColor | eCopy eColor | imprint clean separate shell check" />
        </aside>
      </main>

      <section className="mt-[7px] shrink-0 border-t border-b border-t-black border-b-[#8f8d80] pt-[5px] pr-2 pl-1">
        <div className="flex h-[49px]">
          <Grip />
          <div className="flex min-w-0 flex-1 flex-col border-t-2 border-l border-black bg-white font-['Liberation_Mono',monospace] text-[13px] leading-[13px]">
            <div className="flex h-[30px] border-b border-[#8f8d80]">
              <div className="flex-1 pl-0.5">
                <p>AutoCAD Express Tools Copyright © 2002-2004 Autodesk, Inc.</p>
                <p>Utilidades de menú de AutoCAD cargadas.</p>
              </div>
              <div className="flex flex-col"><ScrollButton dir="up" /><ScrollButton dir="down" /></div>
            </div>
            <div className="flex flex-1 items-center">
              <label className="flex min-w-0 flex-1 items-center pl-0.5">
                Comando:
                <input type="text" className="min-w-0 flex-1 bg-transparent pl-1 outline-none" />
              </label>
              <div className="flex gap-0.5 bg-[#f7f7f5]">
                <ScrollButton dir="left" />
                <Thumb />
                <span className="w-3" />
                <ScrollButton dir="right" />
              </div>
              <span className="h-full w-[19px] bg-[#ece9d8]" />
            </div>
          </div>
        </div>
      </section>

      <footer className="flex h-[23px] shrink-0 items-center gap-1 border-t border-white pl-1 font-['Liberation_Sans',sans-serif]">
        <output className="h-[19px] w-[239px] border border-t-[#aca899] border-r-white border-b-white border-l-[#aca899] pl-0.5 leading-[19px]">
          166.4696, -0.7606, 0.0000
        </output>
        {modes.map(([name, on, width]) => (
          <button
            key={name}
            type="button"
            aria-pressed={on}
            className={`h-[19px] shrink-0 overflow-hidden border text-center leading-[18px] ${width} ${on ? "border-t-black border-r-white border-b-white border-l-black bg-[#f3f1e8]" : "border-t-[#faf9f4] border-r-[#aca899] border-b-[#aca899] border-l-[#faf9f4]"}`}
          >
            {name}
          </button>
        ))}
        <span className="flex-1" />
        <div className="flex h-[19px] items-center gap-1 border-l border-[#aca899] bg-[#f3f1e8] px-1">
          <Icon name="dish" />
          <Icon name="padlock" />
        </div>
        <button type="button" aria-label="Menú de la barra de estado" className="flex h-[19px] w-3 items-end">
          <svg viewBox="0 0 8 8" className="h-2 w-2"><path d="M0 1H8L4 5z" fill="#000" /></svg>
        </button>
      </footer>
    </div>
  );
}
